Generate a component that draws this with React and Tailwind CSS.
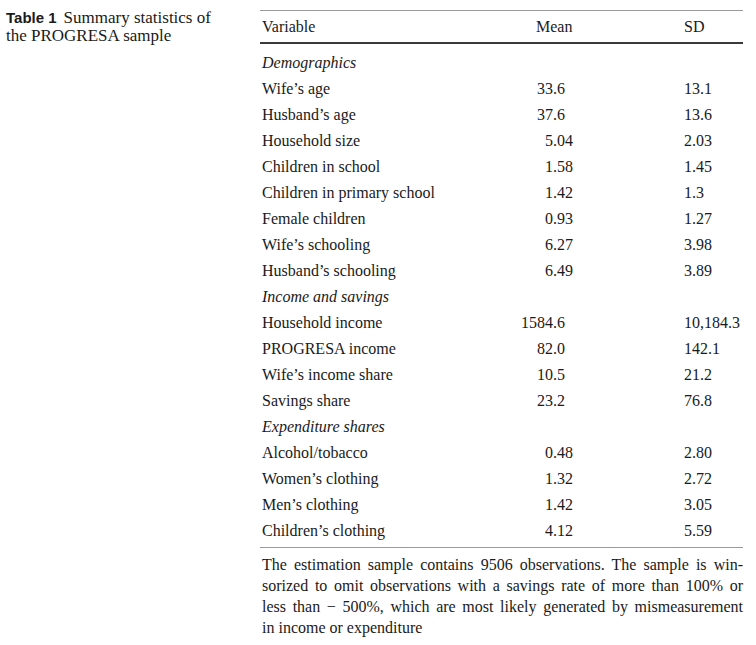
import React from "react";

const sections = [
  {
    title: "Demographics",
    rows: [
      ["Wife’s age", "33", ".6", "13.1"],
      ["Husband’s age", "37", ".6", "13.6"],
      ["Household size", "5", ".04", "2.03"],
      ["Children in school", "1", ".58", "1.45"],
      ["Children in primary school", "1", ".42", "1.3"],
      ["Female children", "0", ".93", "1.27"],
      ["Wife’s schooling", "6", ".27", "3.98"],
      ["Husband’s schooling", "6", ".49", "3.89"],
    ],
  },
  {
    title: "Income and savings",
    rows: [
      ["Household income", "1584", ".6", "10,184.3"],
      ["PROGRESA income", "82", ".0", "142.1"],
      ["Wife’s income share", "10", ".5", "21.2"],
      ["Savings share", "23", ".2", "76.8"],
    ],
  },
  {
    title: "Expenditure shares",
    rows: [
      ["Alcohol/tobacco", "0", ".48", "2.80"],
      ["Women’s clothing", "1", ".32", "2.72"],
      ["Men’s clothing", "1", ".42", "3.05"],
      ["Children’s clothing", "4", ".12", "5.59"],
    ],
  },
];

const note = [
  "The estimation sample contains 9506 observations. The sample is win-",
  "sorized to omit observations with a savings rate of more than 100% or",
  "less than − 500%, which are most likely generated by mismeasurement",
];

function Row({ label, whole, frac, sd }) {
  return (
    <div className="flex h-[26px] items-center">
      <div className="w-[246px] pl-[2px]">{label}</div>
      <div className="flex w-[178px]">
        <span className="w-[47px] text-right">{whole}</span>
        <span>{frac}</span>
      </div>
      <div>{sd}</div>
    </div>
  );
}

export default function App() {
  return (
    <div className="flex bg-white text-[16px] text-[#1a1a1a] [font-family:'Liberation_Serif',serif] w-[756px] h-[645px]">
      <div className="w-[260px] pl-[6px] pt-[9px] leading-[18px] text-[17px]">
        <span className="[font-family:'Liberation_Sans',sans-serif] font-bold text-[15px] mr-[7px]">
          Table 1
        </span>
        Summary statistics of
        <br />
        the PROGRESA sample
      </div>
      <div className="w-[483px] pt-[10px]">
        <div className="border-t-[1.5px] border-[#9a9a9a]" />
        <div className="flex h-[31px] items-center">
          <div className="w-[276px] pl-[2px]">Variable</div>
          <div className="w-[148px]">Mean</div>
          <div>SD</div>
        </div>
        <div className="border-t-[2.5px] border-[#3a3a3a]" />
        <div className="pt-[6px]">
          {sections.map((s) => (
            <div key={s.title}>
              <div className="flex h-[26px] items-center pl-[2px] italic">{s.title}</div>
              {s.rows.map((r) => (
                <Row key={r[0]} label={r[0]} whole={r[1]} frac={r[2]} sd={r[3]} />
              ))}
            </div>
          ))}
        </div>
        <div className="mt-[3px] border-t-[1.5px] border-[#9a9a9a]" />
        <div className="pt-[6px] pl-[2px] leading-[21px]">
          {note.map((line) => (
            <div key={line} className="text-justify [text-align-last:justify] whitespace-nowrap">
              {line}
            </div>
          ))}
          <div>in income or expenditure</div>
        </div>
      </div>
    </div>
  );
}
